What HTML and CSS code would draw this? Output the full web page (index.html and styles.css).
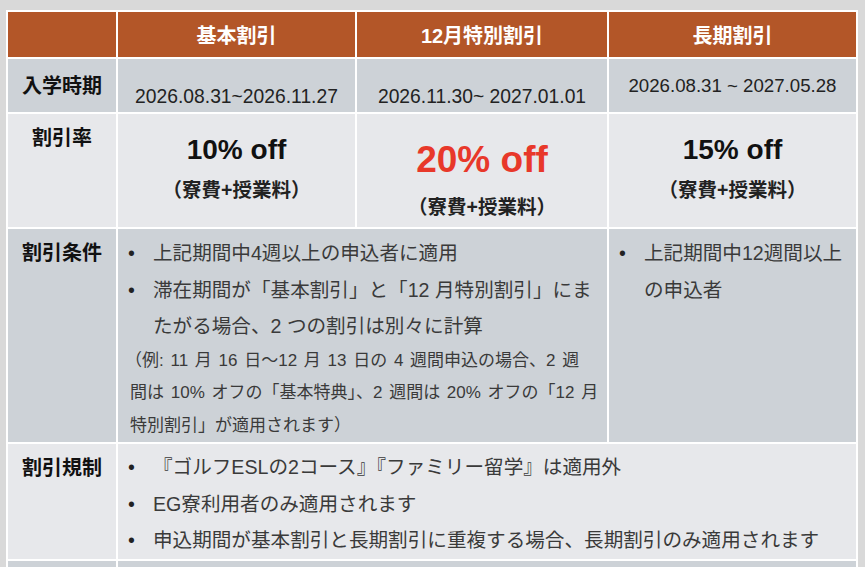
FILE: index.html
```html
<!DOCTYPE html>
<html lang="ja">
<head>
<meta charset="utf-8">
<title>割引</title>
<link rel="stylesheet" href="styles.css">
</head>
<body>
<div class="page">
  <table class="promo">
    <colgroup>
      <col class="c1"><col class="c2"><col class="c3"><col class="c4">
    </colgroup>
    <thead>
      <tr class="head">
        <th></th>
        <th>基本割引</th>
        <th>12月特別割引</th>
        <th>長期割引</th>
      </tr>
    </thead>
    <tbody>
      <tr class="r-period dark">
        <th class="label mid">入学時期</th>
        <td class="date low">2026.08.31~2026.11.27</td>
        <td class="date low">2026.11.30~ 2027.01.01</td>
        <td class="date">2026.08.31 ~ 2027.05.28</td>
      </tr>
      <tr class="r-rate light">
        <th class="label">割引率</th>
        <td class="rate"><div class="pct">10% off</div><div class="basis">（寮費+授業料）</div></td>
        <td class="rate special"><div class="pct">20% off</div><div class="basis">（寮費+授業料）</div></td>
        <td class="rate"><div class="pct">15% off</div><div class="basis">（寮費+授業料）</div></td>
      </tr>
      <tr class="r-cond dark">
        <th class="label">割引条件</th>
        <td class="cond cond-top" colspan="2">
          <ul class="bullets">
            <li><span class="dot">•</span><span>上記期間中4週以上の申込者に適用</span></li>
            <li><span class="dot">•</span><span>滞在期間が「基本割引」と「12 月特別割引」にま<br>たがる場合、2 つの割引は別々に計算</span></li>
          </ul>
          <p class="note">（例: 11 月 16 日～12 月 13 日の 4 週間申込の場合、2 週<br>間は 10% オフの「基本特典」、2 週間は 20% オフの「12 月<br>特別割引」が適用されます）</p>
        </td>
        <td class="cond cond-top">
          <ul class="bullets">
            <li><span class="dot">•</span><span>上記期間中12週間以上の申込者</span></li>
          </ul>
        </td>
      </tr>
      <tr class="r-rule light">
        <th class="label">割引規制</th>
        <td class="cond" colspan="3">
          <ul class="bullets">
            <li><span class="dot">•</span><span>『ゴルフESLの2コース』『ファミリー留学』は適用外</span></li>
            <li><span class="dot">•</span><span>EG寮利用者のみ適用されます</span></li>
            <li><span class="dot">•</span><span>申込期間が基本割引と長期割引に重複する場合、長期割引のみ適用されます</span></li>
          </ul>
        </td>
      </tr>
      <tr class="r-more dark">
        <th class="label"></th>
        <td class="cond" colspan="3"></td>
      </tr>
    </tbody>
  </table>
</div>
</body>
</html>
```

FILE: styles.css
```css
html, body {
  margin: 0;
  padding: 0;
  overflow: hidden;
  background: #d9d9d9;
}

.page {
  padding: 10px 0 0 6px;
}

.promo {
  border-collapse: separate;
  border-spacing: 2px;
  background: #ffffff;
  table-layout: fixed;
  width: 852px;
  font-family: "Liberation Sans", "Noto Sans CJK JP", sans-serif;
  color: #222;
}

.c1 { width: 108px; }
.c2 { width: 237px; }
.c3 { width: 250px; }
.c4 { width: 247px; }

.promo th,
.promo td {
  padding: 0;
  vertical-align: top;
}

.head { height: 45px; }
.head th {
  background: #b35628;
  color: #ffffff;
  font-size: 20px;
  font-weight: 700;
  text-align: center;
  vertical-align: middle;
}

.dark th, .dark td { background: #cdd2d7; }
.light th, .light td { background: #e7e8eb; }

.label {
  font-size: 20px;
  font-weight: 700;
  color: #111;
  text-align: center;
  line-height: 30px;
  padding-top: 9px !important;
}

.label.mid {
  vertical-align: middle !important;
  padding-top: 0 !important;
}

.r-period { height: 53px; }
.date {
  font-size: 18.67px;
  line-height: 28px;
  text-align: center;
  vertical-align: middle !important;
  color: #222;
}
.date.low {
  font-size: 19.3px;
  padding-top: 22px !important;
}

.r-rate { height: 113px; }
.rate {
  text-align: center;
  padding-top: 16px !important;
}
.pct {
  font-size: 28px;
  font-weight: 700;
  line-height: 40px;
  color: #111;
}
.basis {
  font-size: 19.5px;
  font-weight: 700;
  line-height: 40px;
  color: #222;
}
.special .pct {
  font-size: 37px;
  line-height: 60px;
  color: #e8382a;
}
.special .basis { line-height: 34px; }

.r-cond { height: 212px; }
.r-rule { height: 113px; }
.r-more { height: 60px; }

.cond {
  padding: 5px 0 0 10px !important;
  color: #3a3a3a;
}
.cond.cond-top {
  padding-top: 6px !important;
}

.bullets {
  list-style: none;
  margin: 0;
  padding: 0;
  font-size: 19.6px;
  line-height: 36.5px;
}
.bullets li {
  display: flex;
}
.dot {
  flex: none;
  width: 25px;
  color: #222;
}

.note {
  margin: 0 0 0 2px;
  font-size: 17px;
  line-height: 32.5px;
  word-spacing: 2px;
  text-indent: -5px;
  color: #3a3a3a;
}
```
